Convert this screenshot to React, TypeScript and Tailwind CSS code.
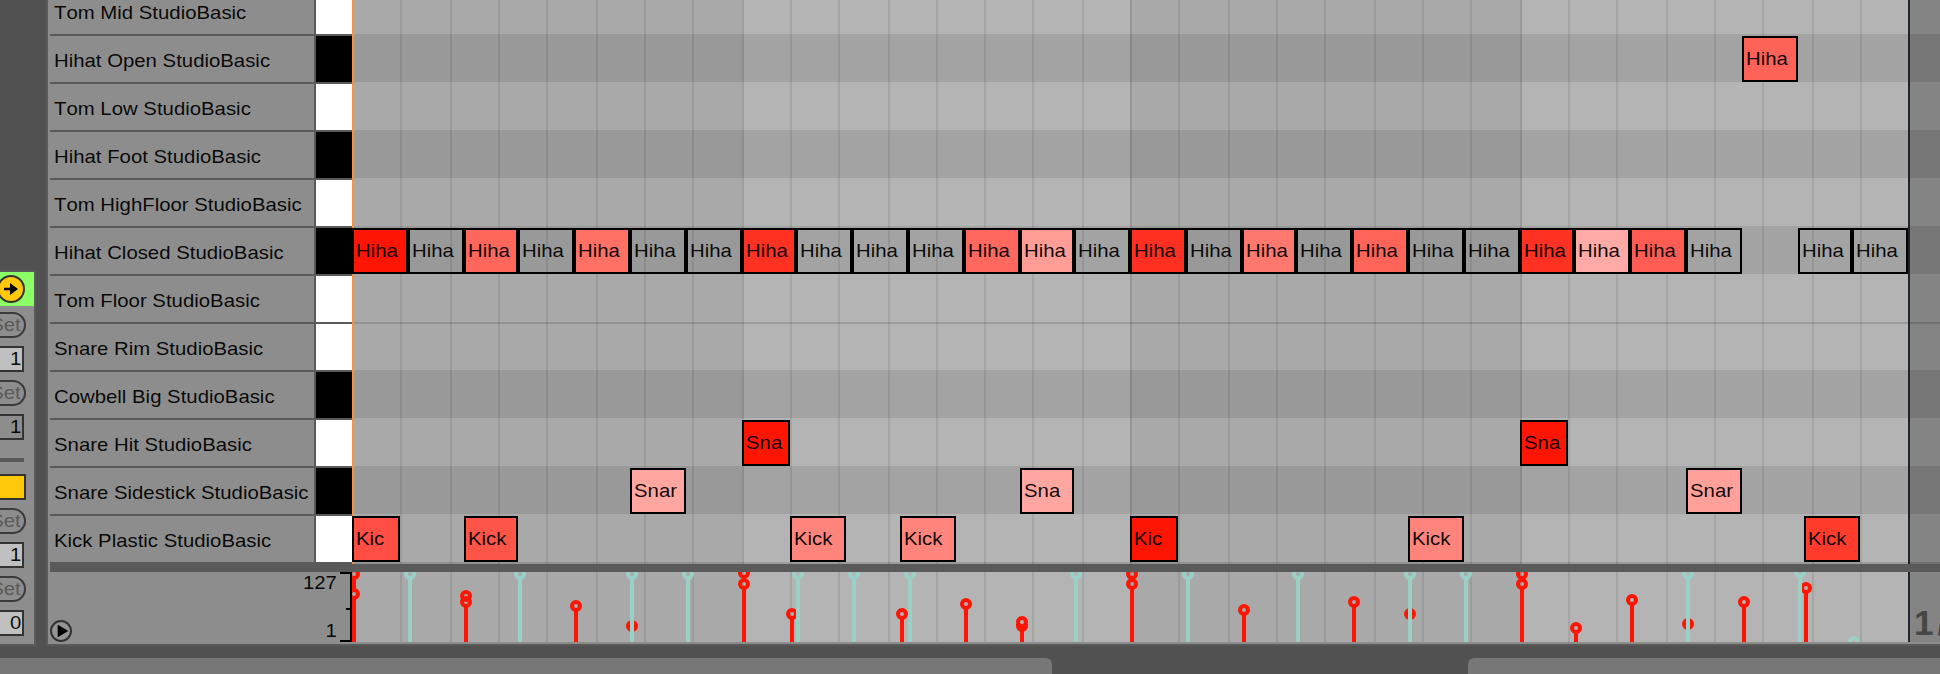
import React from "react";

const GRID_LEFT = 352;

const rows = [
  { name: "Tom Mid StudioBasic", black: false },
  { name: "Hihat Open StudioBasic", black: true },
  { name: "Tom Low StudioBasic", black: false },
  { name: "Hihat Foot StudioBasic", black: true },
  { name: "Tom HighFloor StudioBasic", black: false },
  { name: "Hihat Closed StudioBasic", black: true },
  { name: "Tom Floor StudioBasic", black: false },
  { name: "Snare Rim StudioBasic", black: false },
  { name: "Cowbell Big StudioBasic", black: true },
  { name: "Snare Hit StudioBasic", black: false },
  { name: "Snare Sidestick StudioBasic", black: true },
  { name: "Kick Plastic StudioBasic", black: false },
];

type Note = [row: number, start: number, end: number, text: string, color: string];

const CLEAR = "transparent";

const notes: Note[] = [
  [1, 1742, 1798, "Hiha", "#ff6257"],
  [5, 352, 408, "Hiha", "#ff1503"],
  [5, 408, 464, "Hiha", CLEAR],
  [5, 464, 518, "Hiha", "#ff665c"],
  [5, 518, 574, "Hiha", CLEAR],
  [5, 574, 630, "Hiha", "#ff7065"],
  [5, 630, 686, "Hiha", CLEAR],
  [5, 686, 742, "Hiha", CLEAR],
  [5, 742, 796, "Hiha", "#ff3122"],
  [5, 796, 852, "Hiha", CLEAR],
  [5, 852, 908, "Hiha", CLEAR],
  [5, 908, 964, "Hiha", CLEAR],
  [5, 964, 1020, "Hiha", "#ff685f"],
  [5, 1020, 1074, "Hiha", "#ff9c96"],
  [5, 1074, 1130, "Hiha", CLEAR],
  [5, 1130, 1186, "Hiha", "#ff3022"],
  [5, 1186, 1242, "Hiha", CLEAR],
  [5, 1242, 1296, "Hiha", "#ff786e"],
  [5, 1296, 1352, "Hiha", CLEAR],
  [5, 1352, 1408, "Hiha", "#ff6459"],
  [5, 1408, 1464, "Hiha", CLEAR],
  [5, 1464, 1520, "Hiha", CLEAR],
  [5, 1520, 1574, "Hiha", "#ff3122"],
  [5, 1574, 1630, "Hiha", "#ffaaa6"],
  [5, 1630, 1686, "Hiha", "#ff5d53"],
  [5, 1686, 1742, "Hiha", CLEAR],
  [5, 1798, 1852, "Hiha", CLEAR],
  [5, 1852, 1908, "Hiha", CLEAR],
  [9, 742, 790, "Sna", "#ff1503"],
  [9, 1520, 1568, "Sna", "#ff1503"],
  [10, 630, 686, "Snar", "#ffa6a0"],
  [10, 1020, 1074, "Sna", "#ffa6a0"],
  [10, 1686, 1742, "Snar", "#ffa09a"],
  [11, 352, 400, "Kic", "#ff4e44"],
  [11, 464, 518, "Kick", "#ff5448"],
  [11, 790, 846, "Kick", "#ff857c"],
  [11, 900, 956, "Kick", "#ff857c"],
  [11, 1130, 1178, "Kic", "#ff1503"],
  [11, 1408, 1464, "Kick", "#ff857c"],
  [11, 1804, 1860, "Kick", "#ff3b2c"],
];

// Right edges of the grid cells, grouped into beats of alternating shade.
const beats = [
  { bg: "bg-[#a9a9a9]", end: "border-black/[0.07]", edges: [402, 452, 500, 548, 598, 646, 694, 744] },
  { bg: "bg-[#b4b4b4]", end: "border-black/[0.17]", edges: [792, 840, 890, 938, 986, 1034, 1084, 1132] },
  { bg: "bg-[#a9a9a9]", end: "border-black/[0.09]", edges: [1180, 1230, 1278, 1326, 1376, 1424, 1472, 1522] },
  { bg: "bg-[#b4b4b4]", end: "border-[#202631]", edges: [1570, 1618, 1668, 1716, 1764, 1814, 1862, 1910] },
];

// Start position and the marker heights of every velocity stem.
const redStems: [number, number[]][] = [
  [352, [574, 594]],
  [464, [596, 602]],
  [574, [606]],
  [630, [626]],
  [742, [573, 584]],
  [790, [614]],
  [900, [614]],
  [964, [604]],
  [1020, [622, 626]],
  [1130, [574, 584]],
  [1242, [610]],
  [1352, [602]],
  [1408, [614]],
  [1520, [574, 584]],
  [1574, [628]],
  [1630, [600]],
  [1686, [624]],
  [1742, [602]],
  [1804, [588]],
];
const tealStems: [number, number[]][] = [
  ...[408, 518, 630, 686, 796, 852, 908, 1074, 1186, 1296, 1408, 1464, 1686].map(
    (x): [number, number[]] => [x, [574]],
  ),
  [1798, [572]],
  [1852, [642]],
];

function Columns() {
  let x = GRID_LEFT;
  return (
    <div className="flex h-full w-full">
      {beats.map((beat, b) => (
        <div key={b} className={`flex h-full shrink-0 ${beat.bg}`}>
          {beat.edges.map((edge, i) => {
            const width = edge - x;
            x = edge;
            const line = i === beat.edges.length - 1 ? beat.end : "border-black/[0.08]";
            return <div key={edge} className={`h-full border-r-2 ${line}`} style={{ width }} />;
          })}
        </div>
      ))}
      <div className="h-full flex-1 bg-[#848484]" />
    </div>
  );
}

function NoteGrid() {
  return (
    <div className="relative h-[564px] w-[1588px] overflow-hidden">
      <Columns />
      <div className="absolute inset-0 flex flex-col">
        {rows.map((r, i) => (
          <div
            key={r.name}
            className={`shrink-0 ${i === 0 ? "h-[34px]" : "h-12"} ${r.black ? "bg-black/[0.095]" : ""} ${
              i === 7 ? "border-t-2 border-black/[0.13]" : ""
            }`}
          />
        ))}
        <div className="h-0.5 shrink-0 bg-black/[0.13]" />
      </div>
      <div className="absolute inset-y-0 left-0 w-0.5 bg-[#f8923c]" />
      {notes.map(([row, start, end, text, color]) => (
        <div
          key={`${row}-${start}`}
          className="absolute h-[46px] overflow-hidden border-2 border-black pl-[1.5px] text-[18.5px] leading-[42px] whitespace-nowrap text-black/95"
          style={{ left: start - GRID_LEFT, top: 48 * row - 12, width: end - start, backgroundColor: color }}
        >
          <span className="block w-10 origin-left scale-x-110">{text}</span>
        </div>
      ))}
    </div>
  );
}

function Stems({ stems, color }: { stems: [number, number[]][]; color: string }) {
  return (
    <g stroke={color} strokeWidth={4} fill="none">
      {stems.map(([start, ys]) => {
        const x = start + 2;
        const lowest = Math.max(...ys);
        return (
          <g key={start}>
            <path d={`M${x} ${lowest + 4}V642`} />
            {ys.length > 1 && start !== 1020 && <path d={`M${x} ${ys[0] + 4}V${ys[1] - 4}`} />}
            {ys.map((y, i) => (start === 1020 && i === 1 ? (
              <path key={y} d={`M${x - 4} ${y - 2}V${y}A4 4 0 0 0 ${x + 4} ${y}V${y - 2}M${x} ${y}V642`} />
            ) : (
              <circle key={y} cx={x} cy={y} r={4} />
            )))}
          </g>
        );
      })}
    </g>
  );
}

function VelocityLane() {
  return (
    <div className="relative h-[70px] w-[1588px] overflow-hidden">
      <Columns />
      <svg className="absolute inset-0" width={1588} height={70} viewBox="352 572 1588 70">
        <Stems stems={redStems} color="#ff1503" />
        <Stems stems={tealStems} color="#9bd0c7" />
      </svg>
      <span className="absolute top-[31px] left-[1562px] text-[35px] leading-10 font-bold tracking-[4px] whitespace-nowrap text-[#464646]">
        1/
      </span>
    </div>
  );
}

function SetButton({ className }: { className: string }) {
  return (
    <div
      className={`${className} flex h-[26px] w-[60px] shrink-0 items-center justify-end rounded-full border-2 border-[#3a3a3a] pt-px pr-[3px] text-[18.5px] leading-none text-[#5a5a5a]`}
    >
      <span className="origin-right scale-x-110">Set</span>
    </div>
  );
}

function NumberBox({ value, className }: { value: string; className: string }) {
  return (
    <div
      className={`${className} mr-0.5 flex h-[26px] w-[60px] shrink-0 items-center justify-end border-2 border-[#333] pr-px text-[18.5px] leading-none text-black/95`}
    >
      <span className="origin-right scale-x-110">{value}</span>
    </div>
  );
}

function ClipPanel() {
  return (
    <div className="flex w-9 shrink-0 flex-col overflow-hidden bg-[#515151] pt-[270px]">
      <div className="flex flex-1 flex-col border-t-2 border-r-2 border-b-2 border-[#5a5a5a] bg-[#8d8d8d]">
        <div className="h-[34px] shrink-0 overflow-hidden bg-[#8aff66]">
          <svg width={34} height={34} viewBox="0 0 34 34">
            <circle cx={11} cy={17} r={13} fill="#ffc80a" stroke="#333" strokeWidth={2} />
            <path d="M4 15.8H10V11L18 17L10 23V18.2H4Z" fill="#000" />
          </svg>
        </div>
        <div className="flex w-[26px] flex-col items-end">
          <SetButton className="mt-1.5" />
          <NumberBox value="1" className="mt-2 bg-[#c0c0c0]" />
          <SetButton className="mt-2" />
          <NumberBox value="1" className="mt-2" />
          <div className="mt-[18px] mr-0.5 h-1 w-6 shrink-0 bg-[#5a5a5a]" />
          <div className="mt-3 h-[26px] w-[60px] shrink-0 border-2 border-[#333] bg-[#ffc80a]" />
          <SetButton className="mt-2" />
          <NumberBox value="1" className="mt-2 bg-[#c0c0c0]" />
          <SetButton className="mt-2" />
          <NumberBox value="0" className="mt-2 bg-[#c0c0c0]" />
        </div>
      </div>
    </div>
  );
}

function DrumLabels() {
  return (
    <div className="flex h-[562px] w-[302px] shrink-0 flex-col">
      {rows.map((r, i) => (
        <div
          key={r.name}
          className={`flex shrink-0 border-[#5a5a5a] ${i === 0 ? "h-9 items-end" : i === 11 ? "h-[46px]" : "h-12"} ${
            i === 11 ? "" : "border-b-2"
          }`}
        >
          <div className="flex h-[46px] w-[266px] items-center border-r-2 border-[#5a5a5a] pt-[5px] pl-[3.5px] text-[18.5px] leading-none whitespace-nowrap text-black/95">
            <span className="origin-left scale-x-110">{r.name}</span>
          </div>
          <div className={`h-[46px] w-9 ${r.black ? "bg-black" : "bg-white"}`} />
        </div>
      ))}
    </div>
  );
}

function VelocityScale() {
  return (
    <div className="flex h-[70px] w-[302px] shrink-0 items-stretch">
      <div className="flex flex-1 items-end">
        <svg width={22} height={22} viewBox="0 0 22 22">
          <circle cx={11} cy={11} r={10} fill="#949494" stroke="#333" strokeWidth={2} />
          <path d="M7.7 4.8L18.3 11L7.7 17.2Z" fill="#000" />
        </svg>
      </div>
      <div className="flex origin-right scale-x-110 flex-col justify-between text-right text-[18.5px] leading-[22px] text-black/95">
        <span>127</span>
        <span>1</span>
      </div>
      <svg className="ml-[3px]" width={12} height={70} viewBox="0 0 12 70">
        <path d="M0 1H11V69H0M6 37H11" fill="none" stroke="#000" strokeWidth={2} />
      </svg>
    </div>
  );
}

export default function App() {
  return (
    <div className="flex h-[674px] w-[1940px] flex-col overflow-hidden bg-[#515151] font-['Liberation_Sans',Arial,sans-serif] antialiased [font-kerning:none]">
      <div className="flex h-[646px] shrink-0 gap-2.5">
        <ClipPanel />
        <div className="flex min-w-0 flex-1 flex-col border-b-2 border-l-2 border-[#5a5a5a] bg-[#8d8d8d] pl-0.5">
          <div className="flex h-[562px] shrink-0">
            <DrumLabels />
            <div className="h-[564px]">
              <NoteGrid />
            </div>
          </div>
          <div className="flex h-2.5 shrink-0">
            <div className="w-[302px] bg-[#5a5a5a]" />
            <div className="flex flex-1 flex-col justify-end">
              <div className="h-2 bg-[#5a5a5a]" />
            </div>
          </div>
          <div className="flex h-[70px] shrink-0">
            <VelocityScale />
            <VelocityLane />
          </div>
        </div>
      </div>
      <div className="mt-3 flex h-4 shrink-0 justify-between">
        <div className="w-[1052px] rounded-tr-md bg-[#777]" />
        <div className="w-[472px] rounded-tl-md bg-[#777]" />
      </div>
    </div>
  );
}
